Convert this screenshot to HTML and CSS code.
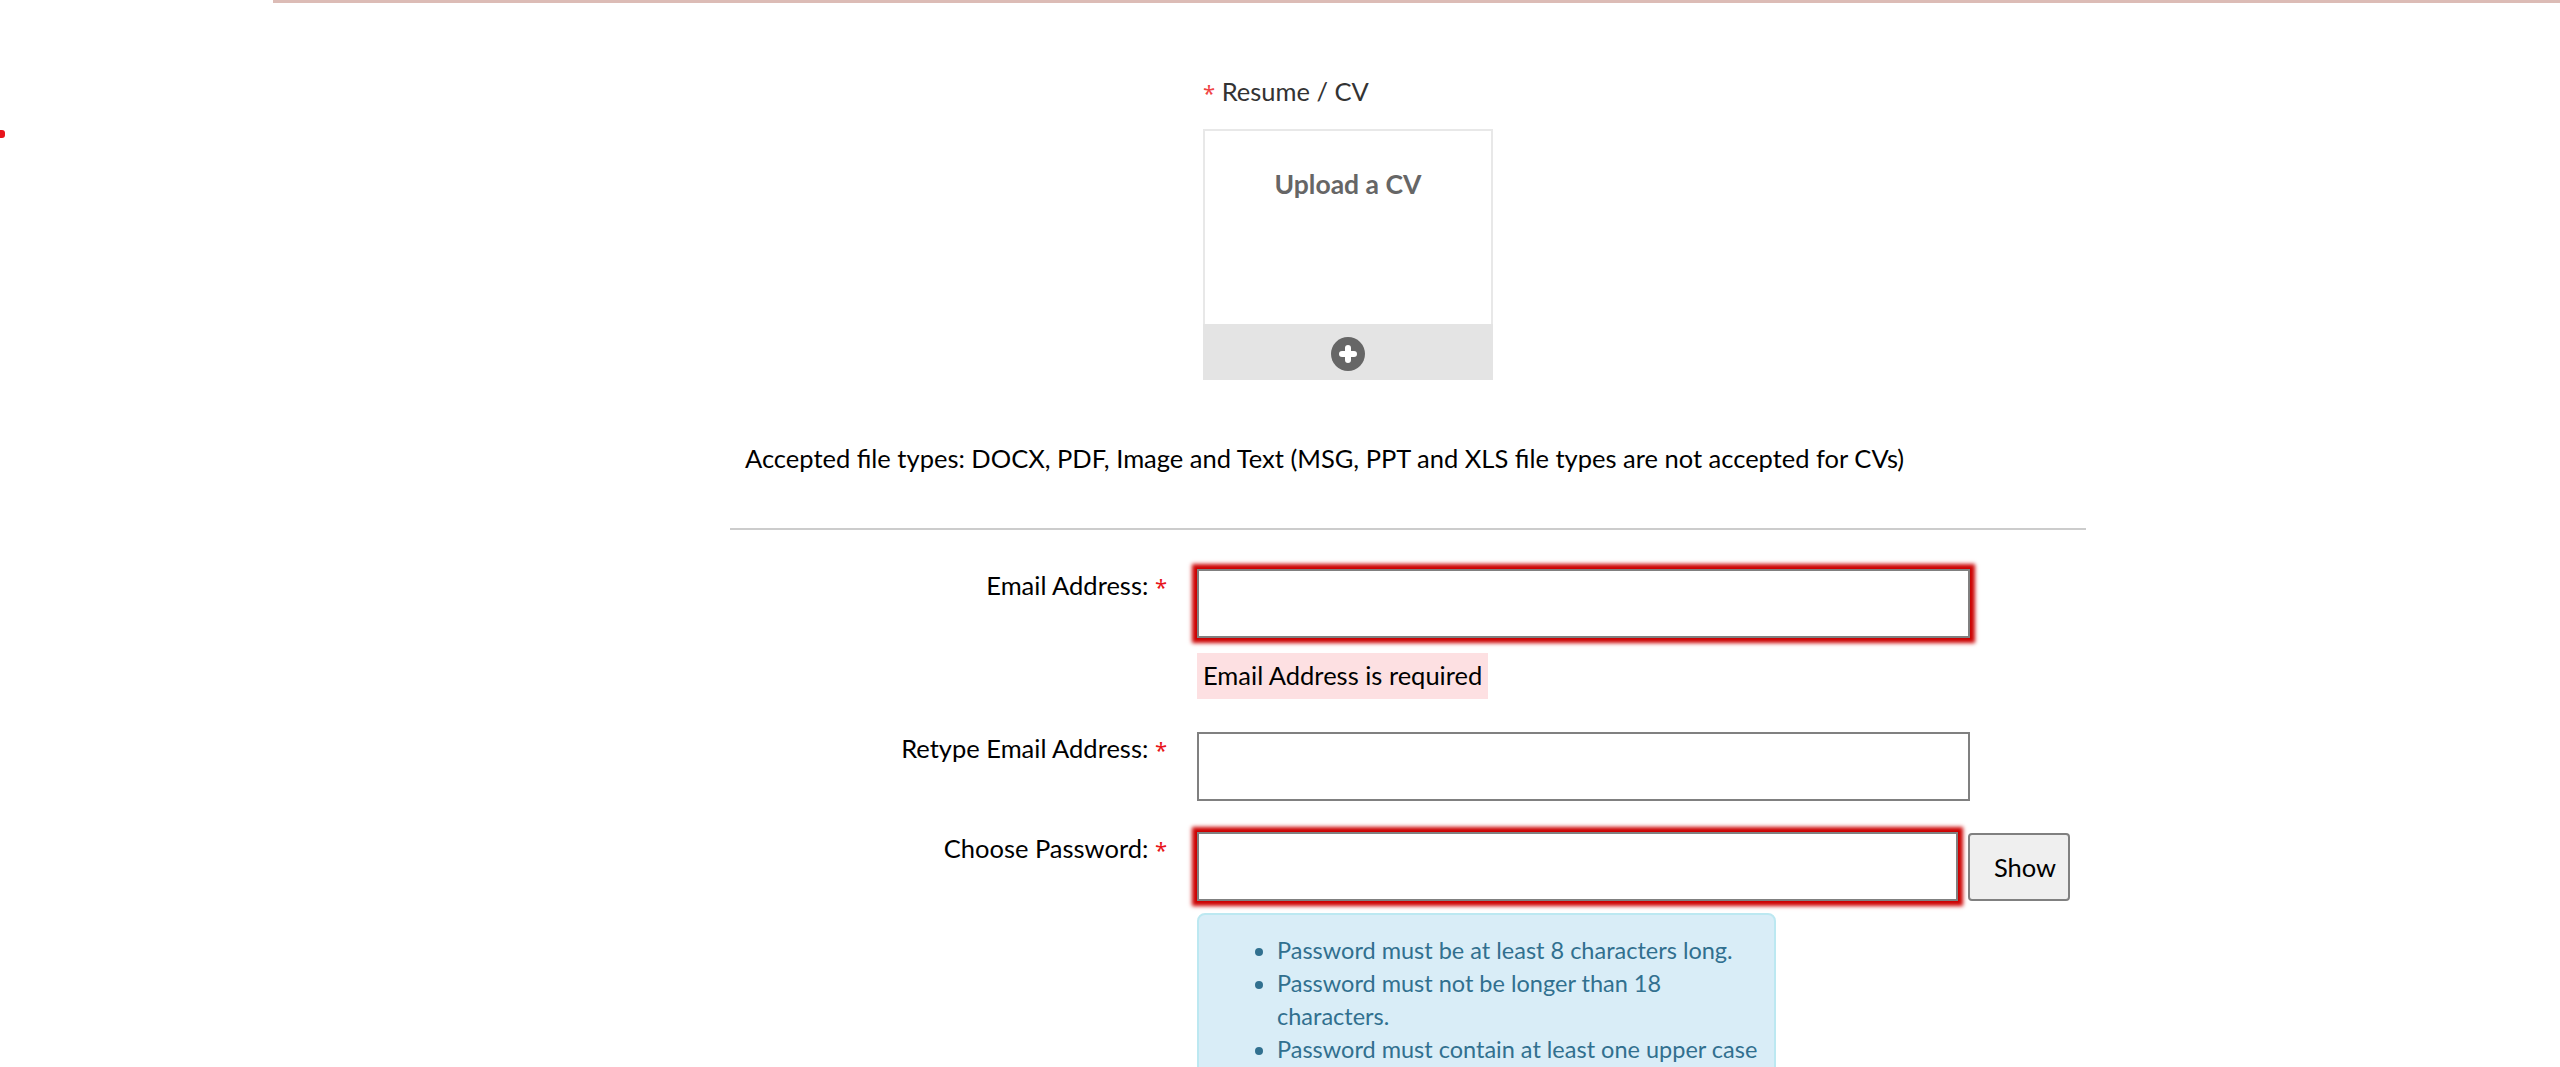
FILE: index.html
```html
<!DOCTYPE html>
<html lang="en">
<head>
    <meta charset="UTF-8">
    <meta name="viewport" content="width=device-width, initial-scale=1.0">
    <title>Create Account</title>
    <link rel="stylesheet" href="styles.css">
</head>
<body>
    <div class="top-line"></div>
    <span class="stray-mark"></span>

    <form class="form">
        <div class="resume">
            <div class="resume-label"><span class="star">*</span> Resume / CV</div>
            <div class="upload-box">
                <div class="upload-title">Upload a CV</div>
                <div class="upload-bar">
                    <svg class="upload-icon" viewBox="0 0 34 34" aria-hidden="true">
                        <circle cx="17" cy="17" r="17" fill="#666666"/>
                        <path d="M17 11v12M11 17h12" stroke="#ffffff" stroke-width="6" stroke-linejoin="round" stroke-linecap="round" fill="none"/>
                    </svg>
                </div>
            </div>
        </div>

        <p class="file-types">Accepted file types: DOCX, PDF, Image and Text (MSG, PPT and XLS file types are not accepted for CVs)</p>
        <hr class="divider">

        <div class="row row-email">
            <label class="field-label">Email Address: <span class="star">*</span></label>
            <div class="field">
                <input class="text-input has-error" type="text">
                <div class="error-msg">Email Address is required</div>
            </div>
        </div>

        <div class="row row-retype">
            <label class="field-label">Retype Email Address: <span class="star">*</span></label>
            <div class="field">
                <input class="text-input" type="text">
            </div>
        </div>

        <div class="row row-password">
            <label class="field-label">Choose Password: <span class="star">*</span></label>
            <div class="field">
                <div class="password-line">
                    <input class="text-input password-input has-error" type="password">
                    <button class="show-btn" type="button">Show</button>
                </div>
                <div class="password-rules">
                    <ul>
                        <li>Password must be at least 8 characters long.</li>
                        <li>Password must not be longer than 18 characters.</li>
                        <li>Password must contain at least one upper case letter.</li>
                    </ul>
                </div>
            </div>
        </div>
    </form>
</body>
</html>
```

FILE: styles.css
```css
* {
    box-sizing: border-box;
}

html, body {
    height: 1067px;
    overflow: hidden;
}

body {
    margin: 0;
    background-color: #ffffff;
    color: #000000;
    font-family: Lato, "Noto Sans", sans-serif;
    font-size: 25.5px;
    line-height: 32px;
    position: relative;
}

.top-line {
    height: 3px;
    margin-left: 273px;
    background-color: #dcbcb6;
}

.stray-mark {
    position: absolute;
    left: 0;
    top: 130px;
    width: 5px;
    height: 8px;
    border-radius: 0 3px 3px 0;
    background-color: #e8141c;
}

.star {
    color: #e8141c;
    font-family: "Noto Sans", sans-serif;
    font-size: 22px;
    line-height: 1;
}

.form {
    width: 1356px;
    margin-left: 730px;
}

.resume {
    margin-left: 473px;
    padding-top: 72px;
}

.resume-label {
    color: #333333;
    margin-bottom: 22px;
}

.resume-label .star {
    color: #f04444;
}

.upload-box {
    width: 290px;
    height: 251px;
    border: 2px solid #e8e8e8;
    display: flex;
    flex-direction: column;
}

.upload-title {
    flex: 1;
    padding-top: 37px;
    text-align: center;
    font-size: 26.5px;
    font-weight: bold;
    color: #666666;
}

.upload-bar {
    height: 56px;
    margin: 0 -2px -2px;
    padding-top: 4px;
    background-color: #e4e4e4;
    display: flex;
    justify-content: center;
    align-items: center;
}

.upload-icon {
    width: 34px;
    height: 34px;
}

.file-types {
    margin: 62px 0 0;
    padding-left: 15px;
}

.divider {
    height: 2px;
    margin: 54px 0 0;
    border: none;
    background-color: #cccccc;
}

.row {
    display: flex;
    gap: 30px;
}

.row-email {
    margin-top: 39px;
}

.row-retype {
    margin-top: 33px;
}

.row-password {
    margin-top: 31px;
}

.field-label {
    width: 437px;
    text-align: right;
}

.field {
    width: 889px;
}

.text-input {
    display: block;
    width: 773px;
    height: 69px;
    border: 2px solid #808080;
    background-color: #ffffff;
    outline: none;
}

.has-error {
    box-shadow: 0 0 4px 5px #cc0000;
}

.error-msg {
    display: inline-block;
    height: 46px;
    margin-top: 15px;
    padding: 6px 6px;
    background-color: #fde0e2;
}

.password-line {
    display: flex;
    gap: 10px;
}

.password-input {
    width: 761px;
}

.show-btn {
    width: 102px;
    height: 68px;
    margin-top: 1px;
    padding: 0 12px 0 24px;
    border: 2px solid #808080;
    border-radius: 4px;
    background-color: #efefef;
    color: #000000;
    font: inherit;
}

.password-rules {
    width: 579px;
    margin-top: 12px;
    padding: 19px 8px 20px 0;
    border: 2px solid #bce8f1;
    border-radius: 8px;
    background-color: #d9edf7;
    color: #31708f;
    font-size: 23.5px;
    line-height: 33px;
}

.password-rules ul {
    margin: 0;
    padding-left: 78px;
}
```
